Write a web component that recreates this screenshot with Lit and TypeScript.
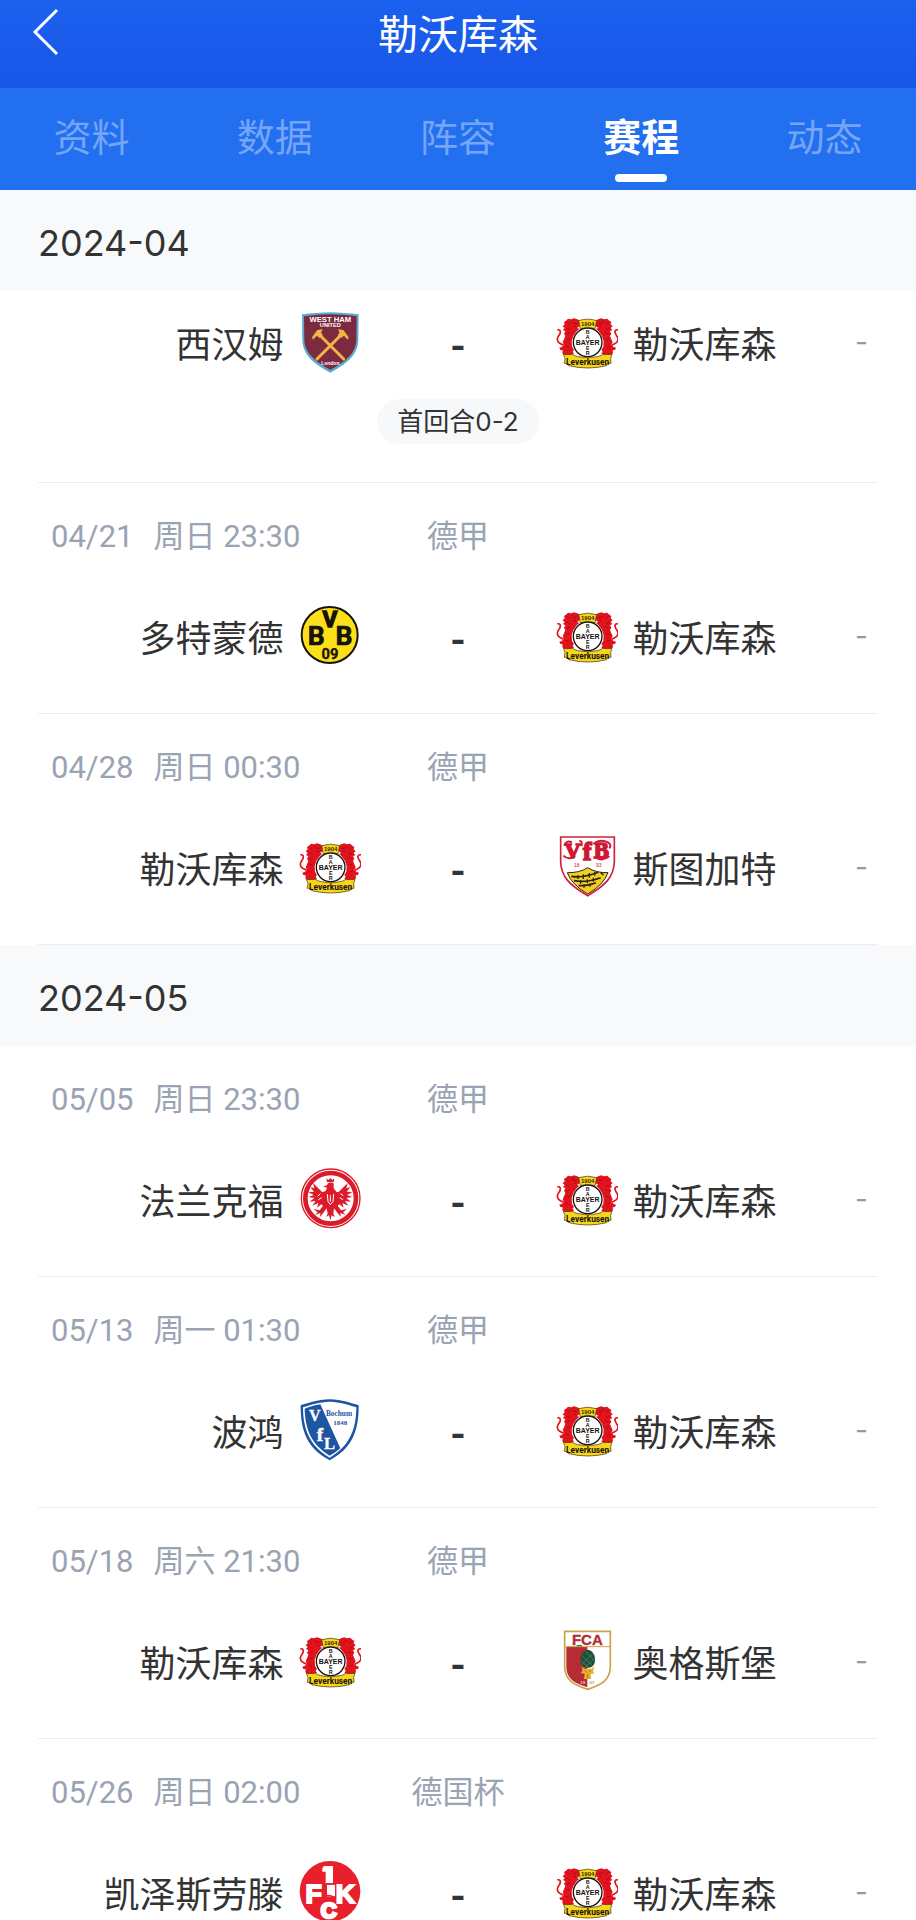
import { LitElement, html, css, svg, nothing } from "lit";
import { customElement, property, state } from "lit/decorators.js";
import { classMap } from "lit/directives/class-map.js";

type Club =
  | "westham" | "leverkusen" | "dortmund" | "stuttgart"
  | "frankfurt" | "bochum" | "augsburg" | "kaiserslautern";

interface Match {
  date?: string;
  time?: string;
  league?: string;
  home: Club;
  away: Club;
  note?: string;
}

const NAMES: Record<Club, string> = {
  westham: "西汉姆",
  leverkusen: "勒沃库森",
  dortmund: "多特蒙德",
  stuttgart: "斯图加特",
  frankfurt: "法兰克福",
  bochum: "波鸿",
  augsburg: "奥格斯堡",
  kaiserslautern: "凯泽斯劳滕",
};

const MONTHS: { label: string; matches: Match[] }[] = [
  {
    label: "2024-04",
    matches: [
      { home: "westham", away: "leverkusen", note: "首回合0-2" },
      { date: "04/21", time: "周日 23:30", league: "德甲", home: "dortmund", away: "leverkusen" },
      { date: "04/28", time: "周日 00:30", league: "德甲", home: "leverkusen", away: "stuttgart" },
    ],
  },
  {
    label: "2024-05",
    matches: [
      { date: "05/05", time: "周日 23:30", league: "德甲", home: "frankfurt", away: "leverkusen" },
      { date: "05/13", time: "周一 01:30", league: "德甲", home: "bochum", away: "leverkusen" },
      { date: "05/18", time: "周六 21:30", league: "德甲", home: "leverkusen", away: "augsburg" },
      { date: "05/26", time: "周日 02:00", league: "德国杯", home: "kaiserslautern", away: "leverkusen" },
    ],
  },
];

const lion = svg`
  <path fill="#e2131d" d="M103 64 L94 58 L84 55 L76 58 L66 56 L60 62 L54 66 L56 73 L50 79 L56 84 L51 90 L58 94 L54 101 L58 108 L54 118 L50 127 L54 135 L47 141 L40 143 L43 150 L50 151 L49 160 L55 165 L72 166 L84 162 L80 155 L84 150 L78 140 L77 124 L82 108 L92 94 L100 86 L93 84 L101 79 Z"/>
  <path fill="none" stroke="#e2131d" stroke-width="5" d="M53 136 C44 130 34 131 34 117 C34 108 44 104 43 95 C43 90 38 88 34 90"/>
  <path fill="none" stroke="#8b0a12" stroke-width="2" d="M62 66 L70 74 M60 84 L70 88 M62 102 L72 98 M60 120 L70 118 M58 138 L68 142 M76 62 L82 70 L92 70 M84 80 L90 78"/>`;

const CRESTS: Record<Club, { box: string; art: unknown }> = {
  westham: {
    box: "24 33 186 186",
    art: svg`
      <path fill="#59acd0" d="M33 43 C60 40 90 37 118 37 C146 37 174 40 203 43 L202 121 C200 170 160 195 118 218 C76 195 36 170 34 121 Z"/>
      <path fill="#7b2a3f" d="M39 49 C66 45 92 43 118 43 C144 43 170 45 197 49 L196 121 C194 165 156 188 118 210 C80 188 42 165 40 121 Z"/>
      <path stroke="#f4b548" stroke-width="9" stroke-linecap="round" d="M83 102 L158 177 M153 102 L78 177"/>
      <path fill="#f4b548" d="M63 112 L79 90 L95 88 L90 98 L96 104 L86 114 L77 107 L66 119 Z M173 112 L157 90 L141 88 L146 98 L140 104 L150 114 L159 107 L170 119 Z"/>
      <text x="118" y="66" font-size="23" font-weight="700" fill="#fff">WEST HAM</text>
      <text x="118" y="81" font-size="17" font-weight="700" fill="#fff">UNITED</text>
      <text x="118" y="195" font-size="15" font-weight="700" fill="#fff">London</text>`,
  },
  leverkusen: {
    box: "30 33 186 186",
    art: svg`
      ${lion}
      <g transform="translate(250 0) scale(-1 1)">${lion}</g>
      <circle cx="125" cy="127" r="43" fill="#fff" stroke="#17120d" stroke-width="4"/>
      <path fill="#f6d51b" stroke="#3a2b08" stroke-width="2" d="M98 62 Q125 53 152 62 L147 86 Q125 78 103 86 Z"/>
      <path fill="#f6d51b" stroke="#3a2b08" stroke-width="2" d="M52 163 Q66 164 80 163 Q86 171 125 173 Q164 171 170 163 Q184 164 198 163 L194 175 L195 190 L184 190 L182 197 Q153 204 125 204 Q97 204 68 197 L66 190 L55 190 L57 175 Z"/>
      <text x="125" y="77" font-size="18" font-weight="700" fill="#3a2b08">1904</text>
      <g font-size="16" font-weight="700" fill="#17120d">
        <text x="125" y="134" font-size="21">BAYER</text>
        <text x="125" y="102">B</text><text x="125" y="117">A</text>
        <text x="125" y="151">E</text><text x="125" y="166">R</text>
      </g>
      <text class="narrow" x="125" y="195" font-size="25" font-weight="700" fill="#17120d">Leverkusen</text>`,
  },
  dortmund: {
    box: "24 30 186 186",
    art: svg`
      <circle cx="116" cy="120" r="84" fill="#fcdf19" stroke="#15130a" stroke-width="6"/>
      <g fill="#15130a" font-weight="700" stroke="#15130a">
        <text class="narrow" x="76" y="151" font-size="80" stroke-width="2">B</text>
        <text class="narrow" x="159" y="151" font-size="80" stroke-width="2">B</text>
        <text class="narrow" x="117" y="97" font-size="68" stroke-width="4">V</text>
        <text class="narrow" x="117" y="191" font-size="44">09</text>
      </g>`,
  },
  stuttgart: {
    box: "30 33 186 186",
    art: svg`
      <path fill="#fff" stroke="#d0213a" stroke-width="5" d="M44 36 H205 V112 C203 155 180 180 125 212 C70 180 46 155 44 112 Z"/>
      <path fill="#f4cf22" stroke="#2f260f" stroke-width="3" d="M64 143 Q100 144 125 128 Q150 144 186 143 Q174 178 125 207 Q76 178 64 143 Z"/>
      <path fill="none" stroke="#2a2412" stroke-width="5" d="M76 154 Q110 160 157 142 M164 142 L172 150 M84 167 Q120 174 164 158 M98 181 Q120 185 150 173"/>
      <path stroke="#2a2412" stroke-width="4" d="M96 150 V162 M112 148 V162 M130 144 V158 M146 140 V152 M104 166 V176 M124 163 V175 M142 158 V170 M114 178 V188 M132 175 V185"/>
      <g font-weight="700" fill="#cf1834" stroke="#cf1834" stroke-width="5">
        <text class="serif" x="80" y="99" font-size="66">V</text>
        <text class="serif" x="124" y="104" font-size="76">f</text>
        <text class="serif" x="166" y="99" font-size="68">B</text>
      </g>
      <path fill="none" stroke="#cf1834" stroke-width="6" d="M55 62 Q60 44 78 52 M52 92 Q66 106 88 94 M100 48 Q110 46 106 64 M148 52 Q166 42 186 52 Q198 60 190 70 M150 98 Q170 110 190 94"/>
      <text x="92" y="127" font-size="15" fill="#d0213a">18</text><text x="158" y="127" font-size="15" fill="#d0213a">93</text>`,
  },
  frankfurt: {
    box: "24 27 186 186",
    art: svg`
      <circle cx="119" cy="118" r="88" fill="#fff" stroke="#dc1a2a" stroke-width="4"/>
      <circle cx="119" cy="118" r="76" fill="#fff" stroke="#dc1a2a" stroke-width="14"/>
      <path fill="#dc1a2a" d="M106 58 L112 63 L118 57 L124 63 L130 58 L128 69 H108 Z M110 74 Q118 68 128 73 L128 88 L136 98 L142 100 L170 72 L166 88 L178 84 L167 98 L184 99 L168 108 L184 114 L166 117 L180 128 L162 126 L172 140 L154 132 L158 146 L145 136 L140 140 L150 154 L168 150 L156 160 L164 168 L148 162 L150 174 L138 160 L129 148 L127 164 L132 174 L122 169 L118 184 L114 169 L105 174 L110 164 L107 148 L98 160 L87 174 L88 162 L72 168 L80 160 L68 150 L86 154 L96 140 L91 136 L78 146 L82 132 L64 140 L74 126 L56 128 L70 117 L52 114 L68 108 L52 99 L69 98 L58 84 L70 88 L66 72 L94 100 L104 96 L108 86 L96 82 L108 79 Z"/>
      <path stroke="#fff" stroke-width="3" fill="none" d="M109 105 L111 128 L118 137 L126 128 L128 105 M118 108 V128 M88 104 L80 112 M148 104 L157 110 M92 116 L82 122 M146 116 L156 122"/>`,
  },
  bochum: {
    box: "24 30 186 186",
    art: svg`
      <path fill="#1d55a2" d="M29 49 C52 42 78 32 116 31 C154 32 180 42 203 49 C204 130 180 180 116 214 C52 180 28 130 29 49 Z"/>
      <path fill="#fff" d="M36 55 C60 47 84 39 116 38 C148 39 172 47 196 55 C196 126 172 174 116 206 C60 174 36 126 36 55 Z"/>
      <path fill="#1d55a2" d="M41 59 C56 53 72 48 88 46 L148 178 Q134 191 116 200 C66 170 42 126 41 59 Z"/>
      <g fill="#fff" stroke="#fff" font-weight="700">
        <text class="serif" x="71" y="97" font-size="48">V</text>
        <text class="serif" x="87" y="156" font-size="54" stroke-width="2">f</text>
        <text class="serif" x="116" y="180" font-size="50">L</text>
      </g>
      <g font-weight="700" fill="#1d55a2">
        <text class="serif" x="144" y="80" font-size="22">Bochum</text>
        <text class="serif" x="148" y="107" font-size="21">1848</text>
      </g>`,
  },
  augsburg: {
    box: "30 33 186 186",
    art: svg`
      <path fill="#fff" stroke="#c9a24a" stroke-width="5" d="M56 37 H193 V142 C193 185 164 199 125 211 C86 199 56 185 56 142 Z"/>
      <path fill="#b62b34" d="M61 84 H124 V205 C88 194 61 181 61 142 Z"/>
      <path stroke="#c9a24a" stroke-width="3" d="M57 83 H192"/>
      <text x="124" y="78" font-size="45" font-weight="700" fill="#b62b34" stroke="#b62b34">FCA</text>
      <path stroke="#3b7d47" stroke-width="4" d="M92 80 H108"/>
      <path fill="#1d5138" d="M125 92 C143 95 150 113 146 131 C143 142 134 146 125 146 C114 146 105 139 103 127 C101 111 110 95 125 92 Z"/>
      <path fill="none" stroke="#5b8c6a" stroke-width="2" d="M108 110 L140 140 M104 124 L126 145 M118 98 L146 124 M140 104 L108 136 M146 118 L118 144"/>
      <path fill="#e9b12f" d="M106 143 L117 149 L136 149 L145 142 L141 156 L145 164 L134 164 L136 180 L114 180 L116 164 L104 162 L110 154 Z"/>
      <path stroke="#7d591a" stroke-width="2" d="M116 154 L122 160 M134 153 L128 160 M125 165 V178"/>
      <text x="110" y="195" font-size="13" fill="#fff">19</text><text x="138" y="195" font-size="13" fill="#b62b34">07</text>`,
  },
  kaiserslautern: {
    box: "24 36 186 186",
    art: svg`
      <circle cx="117" cy="127" r="91" fill="#e8202c"/>
      <path fill="#fff" d="M99 51 H126 V103 H104 V68 H94 V57 Z"/>
      <g fill="#fff" stroke="#fff" font-weight="700">
        <text x="68" y="163" font-size="80" stroke-width="6">F</text>
        <text x="163" y="163" font-size="80" stroke-width="6">K</text>
        <text x="113" y="208" font-size="66" stroke-width="8">C</text>
      </g>
      <path fill="#fff" d="M108 107 H132 V142 H108 Z"/>
      <path fill="none" stroke="#e8202c" stroke-width="4" d="M106 105 V134 M106 105 H132 M94 143 Q112 134 132 146"/>`,
  },
};

@customElement("club-crest")
export class ClubCrest extends LitElement {
  @property() club: Club = "leverkusen";

  static styles = css`
    :host { display: block; flex: none; width: 62px; height: 62px; }
    .art { display: block; width: 100%; height: 100%; overflow: hidden; }
    .art text { font-family: "Liberation Sans", sans-serif; text-anchor: middle; }
    .art .serif { font-family: "Liberation Serif", serif; }
    .art .narrow { font-family: Roboto, sans-serif; }
  `;

  render() {
    const crest = CRESTS[this.club];
    return html`<svg class="art" viewBox=${crest.box} aria-hidden="true">${crest.art}</svg>`;
  }
}

@customElement("match-row")
export class MatchRow extends LitElement {
  @property({ attribute: false }) match!: Match;

  static styles = css`
    :host { display: block; padding: 0 38px; }
    .row { border-bottom: 1px solid #ebedef; padding: 33px 0 46px; }
    .row.partial { padding: 20px 0 38px; }
    .meta {
      display: grid;
      grid-template-columns: 1fr auto 1fr;
      margin-bottom: 47px;
      padding: 0 13px;
      font-family: Roboto, "Noto Sans CJK SC", sans-serif;
      font-size: 31px;
      line-height: 42px;
      color: #9aa3b3;
    }
    .date { display: flex; gap: 20px; white-space: nowrap; }
    .teams {
      display: grid;
      grid-template-columns: 1fr 195px 1fr;
      align-items: center;
      font-size: 36px;
      line-height: 62px;
      color: #333;
    }
    .side { display: flex; align-items: center; gap: 15px; min-width: 0; white-space: nowrap; }
    .home { justify-content: flex-end; }
    .score { text-align: center; font-size: 40px; font-weight: 700; }
    .result {
      margin-left: auto;
      padding-right: 10px;
      font-family: Inter, sans-serif;
      font-size: 28px;
      color: #999;
    }
    .note {
      display: block;
      width: fit-content;
      margin: 26px auto 0;
      padding: 0 20px;
      border-radius: 23px;
      background: #f6f8fa;
      font-family: Inter, "Noto Sans CJK SC", sans-serif;
      font-size: 26px;
      line-height: 45px;
      color: #333;
    }
  `;

  render() {
    const m = this.match;
    return html`
      <article class=${classMap({ row: true, partial: !m.date })}>
        ${m.date
          ? html`<div class="meta">
              <time class="date"><span>${m.date}</span><span>${m.time}</span></time>
              <span>${m.league}</span>
            </div>`
          : nothing}
        <div class="teams">
          <div class="side home"><span>${NAMES[m.home]}</span><club-crest .club=${m.home}></club-crest></div>
          <span class="score">-</span>
          <div class="side">
            <club-crest .club=${m.away}></club-crest><span>${NAMES[m.away]}</span>
            <span class="result">-</span>
          </div>
        </div>
        ${m.note ? html`<span class="note">${m.note}</span>` : nothing}
      </article>
    `;
  }
}

@customElement("app-root")
export class AppRoot extends LitElement {
  @state() private active = "赛程";

  static styles = css`
    :host {
      display: flex;
      flex-direction: column;
      height: 100vh;
      background: #fff;
      font-family: "Noto Sans CJK SC", sans-serif;
      color: #333;
    }
    .bar {
      flex: none;
      display: grid;
      grid-template-columns: 1fr auto 1fr;
      align-items: center;
      padding: 7px 32px 31px;
      background: linear-gradient(#1b60ee, #1956e9);
      color: #fff;
    }
    .title { margin: 0; font-size: 40px; font-weight: 400; line-height: 50px; }
    button { border: 0; padding: 0; background: none; font: inherit; color: inherit; cursor: pointer; }
    .back { justify-self: start; display: block; width: 28px; height: 48px; }
    .back svg { display: block; }
    .tabs { flex: none; display: grid; grid-template-columns: repeat(5, 1fr); background: #226fef; }
    .tab {
      display: flex;
      flex-direction: column;
      align-items: center;
      gap: 13px;
      padding: 21px 0 8px;
      font-size: 38px;
      line-height: 52px;
      color: #74a5f7;
    }
    .tab::after { content: ""; width: 52px; height: 8px; border-radius: 4px; }
    .tab.active { color: #fff; font-weight: 700; }
    .tab.active::after { background: #fff; }
    .list { flex: 1; min-height: 0; overflow-y: auto; scrollbar-width: none; }
    .month {
      margin: 0;
      padding: 27px 38px 21px;
      background: #f7f9fb;
      font-family: Inter, "Noto Sans CJK SC", sans-serif;
      font-size: 36px;
      font-weight: 400;
      line-height: 53px;
    }
  `;

  render() {
    return html`
      <header class="bar">
        <button class="back" aria-label="返回">
          <svg width="28" height="48" viewBox="0 0 28 48" fill="none" stroke="#fff" stroke-width="3">
            <path d="M25 2 L3 24 L25 46" />
          </svg>
        </button>
        <h1 class="title">勒沃库森</h1>
      </header>
      <nav class="tabs">
        ${["资料", "数据", "阵容", "赛程", "动态"].map(
          (t) => html`<button
            class=${classMap({ tab: true, active: t === this.active })}
            @click=${() => (this.active = t)}
          >${t}</button>`
        )}
      </nav>
      <main class="list">
        ${MONTHS.map(
          (g) => html`<section>
            <h2 class="month">${g.label}</h2>
            ${g.matches.map((m) => html`<match-row .match=${m}></match-row>`)}
          </section>`
        )}
      </main>
    `;
  }
}
